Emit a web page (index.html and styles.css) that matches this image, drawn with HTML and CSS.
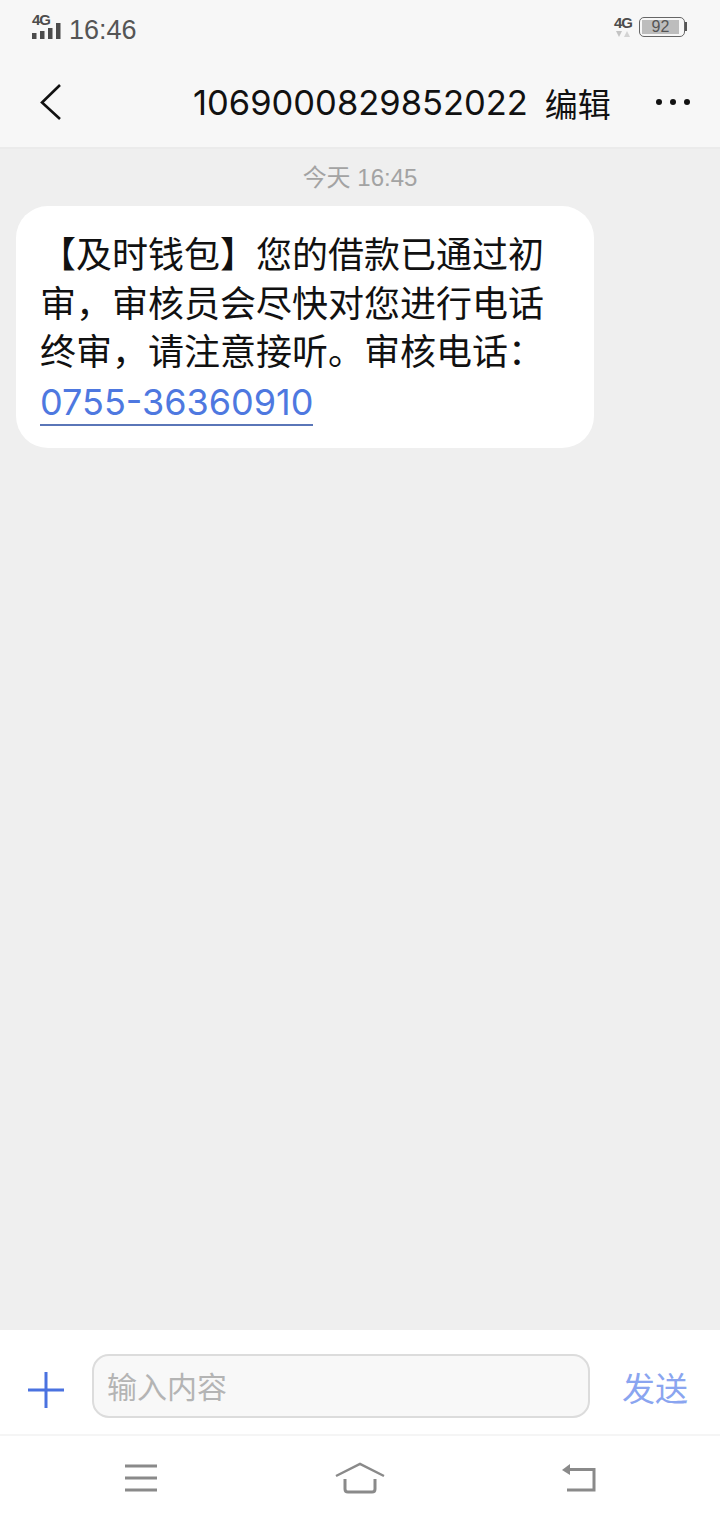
FILE: index.html
```html
<!DOCTYPE html>
<html lang="zh-CN">

<head>
    <meta charset="UTF-8">
    <meta name="viewport" content="width=device-width, initial-scale=1.0">
    <title>短信</title>
    <link rel="stylesheet" href="styles.css">
</head>

<body>
    <div class="phone">

        <!-- Status bar -->
        <div class="status-bar">
            <div class="status-left">
                <div class="signal">
                    <span class="net-label">4G</span>
                    <svg class="signal-bars" width="29" height="17" viewBox="0 0 29 17">
                        <rect x="0" y="10" width="4.500" height="6" fill="#4c4c4c"/>
                        <rect x="8" y="8" width="4.500" height="8" fill="#4c4c4c"/>
                        <rect x="16" y="5" width="4.500" height="11" fill="#4c4c4c"/>
                        <rect x="24" y="0" width="4.500" height="16" fill="#4c4c4c"/>
                    </svg>
                </div>
                <span class="clock">16:46</span>
            </div>
            <div class="status-right">
                <div class="data-net">
                    <span class="net-label">4G</span>
                    <svg width="14" height="6" viewBox="0 0 14 6">
                        <path d="M0 0h6L3 6z" fill="#c4c4c4"/>
                        <path d="M8 6h6L11 0z" fill="#d4d4d4"/>
                    </svg>
                </div>
                <div class="battery">
                    <div class="battery-level">92</div>
                </div>
                <div class="battery-tip"></div>
            </div>
        </div>

        <!-- Title bar -->
        <div class="title-bar">
            <svg class="back-icon" width="24" height="38" viewBox="0 0 24 38">
                <path d="M21 2L3 19.500L21 36" fill="none" stroke="#111" stroke-width="2.600"/>
            </svg>
            <div class="title">
                <span class="number">1069000829852022</span>
                <span class="edit">编辑</span>
            </div>
            <div class="more">
                <i></i><i></i><i></i>
            </div>
        </div>

        <!-- Messages -->
        <div class="messages">
            <div class="msg-time">今天 16:45</div>
            <div class="bubble">
                【及时钱包】您的借款已通过初审，审核员会尽快对您进行电话终审，请注意接听。审核电话：<a class="phone-link" href="#">0755-36360910</a>
            </div>
        </div>

        <!-- Input bar -->
        <div class="input-bar">
            <svg class="plus-icon" width="36" height="36" viewBox="0 0 36 36">
                <path d="M18 0V36M0 18H36" stroke="#4a72e0" stroke-width="3"/>
            </svg>
            <div class="input-box">输入内容</div>
            <div class="send">发送</div>
        </div>

        <!-- Nav bar -->
        <div class="nav-bar">
            <svg width="34" height="28" viewBox="0 0 34 28">
                <path d="M1 2H33M1 14H33M1 26H33" stroke="#8a8a8a" stroke-width="3"/>
            </svg>
            <svg width="50" height="32" viewBox="0 0 50 32">
                <path d="M1 14L25 2L49 14" fill="none" stroke="#8a8a8a" stroke-width="2.500"/>
                <path d="M10 17V27Q10 30 13 30H37Q40 30 40 27V17" fill="none" stroke="#8a8a8a" stroke-width="3"/>
            </svg>
            <svg width="36" height="30" viewBox="0 0 36 30">
                <path d="M1 7L9 1V12z" fill="#8a8a8a"/>
                <path d="M8 6.500H33V27H6" fill="none" stroke="#8a8a8a" stroke-width="3"/>
            </svg>
        </div>

    </div>
</body>

</html>
```

FILE: styles.css
```css
body {
    font-family: "Liberation Sans", "Noto Sans CJK SC", sans-serif;
    margin: 0;
    padding: 0;
    background-color: #efefef;
}

.phone {
    width: 720px;
    height: 1520px;
    display: flex;
    flex-direction: column;
    overflow: hidden;
}

/* Status bar */
.status-bar {
    height: 60px;
    box-sizing: border-box;
    padding: 13px 33px 0 32px;
    background-color: #f7f7f7;
    display: flex;
    justify-content: space-between;
    align-items: flex-start;
}

.status-left {
    display: flex;
    align-items: center;
    gap: 8px;
}

.signal {
    height: 27px;
    width: 29px;
    margin-bottom: 7px;
    position: relative;
}

.signal-bars {
    position: absolute;
    left: 0;
    top: 10px;
}

.signal .net-label {
    position: absolute;
    left: 0;
    top: 0;
    z-index: 1;
}

.net-label {
    font-size: 15px;
    font-weight: bold;
    line-height: 14px;
    color: #4c4c4c;
    letter-spacing: -1px;
}

.clock {
    font-size: 27px;
    color: #555;
    line-height: 34px;
}

.status-right {
    display: flex;
    align-items: center;
    gap: 7px;
    padding-top: 3px;
}

.data-net {
    display: flex;
    flex-direction: column;
    align-items: center;
    gap: 1px;
}

.battery {
    width: 46px;
    height: 20px;
    box-sizing: border-box;
    border: 1.500px solid #666;
    border-radius: 5px;
    padding: 2px;
}

.battery-level {
    height: 100%;
    width: 92%;
    background-color: #bdbdbd;
    color: #555;
    font-size: 16px;
    line-height: 14px;
    text-align: center;
}

.battery-tip {
    width: 2px;
    height: 9px;
    margin-left: -7px;
    background-color: #555;
}

/* Title bar */
.title-bar {
    height: 83px;
    background-color: #f7f7f7;
    border-bottom: 2px solid #ebebeb;
    display: flex;
    align-items: center;
    padding: 0 30px 4px 39px;
}

.back-icon {
    flex-shrink: 0;
}

.title {
    flex: 1;
    padding: 2px 0 0 130px;
    display: flex;
    align-items: center;
    gap: 17px;
    color: #111;
}

.number {
    font-family: "Inter", "Liberation Sans", sans-serif;
    font-size: 34.500px;
}

.edit {
    font-size: 33px;
}

.more {
    display: flex;
    gap: 8px;
}

.more i {
    width: 6px;
    height: 6px;
    border-radius: 50%;
    background-color: #111;
}

/* Messages */
.messages {
    flex: 1;
    padding: 0 16px;
}

.msg-time {
    text-align: center;
    color: #a3a3a3;
    font-size: 24px;
    line-height: 30px;
    margin-top: 14px;
}

.bubble {
    width: 578px;
    box-sizing: border-box;
    margin-top: 13px;
    padding: 26px 24px 21px;
    background-color: #fff;
    border-radius: 32px;
    font-size: 36px;
    line-height: 48.500px;
    color: #111;
}

.phone-link {
    font-family: "Inter", "Liberation Sans", sans-serif;
    font-size: 36px;
    color: #4e78e0;
    white-space: nowrap;
    text-decoration: none;
    border-bottom: 2px solid #5a76b8;
}

/* Input bar */
.input-bar {
    height: 97px;
    padding: 7px 0 0 28px;
    background-color: #fff;
    border-bottom: 2px solid #f5f5f5;
    display: flex;
    align-items: center;
}

.plus-icon {
    flex-shrink: 0;
    margin-top: 9px;
}

.input-box {
    width: 498px;
    height: 64px;
    box-sizing: border-box;
    margin-left: 28px;
    border: 2px solid #dcdcdc;
    border-radius: 17px;
    background-color: #f8f8f8;
    color: #b4b4b4;
    font-size: 30px;
    line-height: 64px;
    padding-left: 13px;
}

.send {
    margin: 2px 0 0 32px;
    font-size: 33px;
    color: #8aa5f0;
}

/* Nav bar */
.nav-bar {
    height: 84px;
    background-color: #fff;
    display: flex;
    align-items: center;
    justify-content: space-between;
    padding: 0 123px 0 124px;
}
```
